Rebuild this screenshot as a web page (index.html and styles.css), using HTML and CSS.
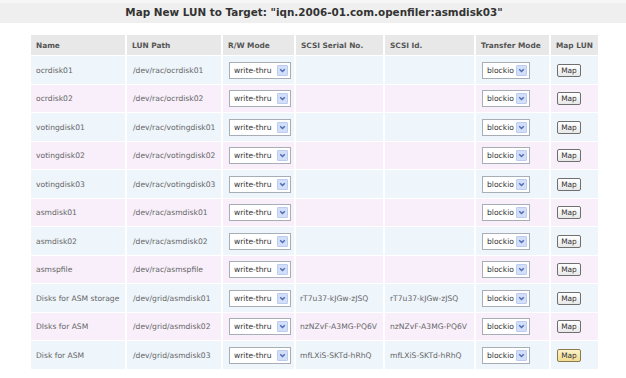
FILE: index.html
```html
<!DOCTYPE html>
<html>
<head>
	<title>Map New LUN</title>
	<meta charset=utf-8>
	<link rel="stylesheet" href="styles.css">
</head>
<body>
	<div class="titlebar">Map New LUN to Target: "iqn.2006-01.com.openfiler:asmdisk03"</div>
	<table class="luns">
		<tr class="head">
			<th class="c-name">Name</th>
			<th class="c-path">LUN Path</th>
			<th class="c-rw">R/W Mode</th>
			<th class="c-serial">SCSI Serial No.</th>
			<th class="c-id">SCSI Id.</th>
			<th class="c-tm">Transfer Mode</th>
			<th class="c-map">Map LUN</th>
		</tr>
	</table>

	<script>
		var rows = [
			["ocrdisk01", "/dev/rac/ocrdisk01", "", ""],
			["ocrdisk02", "/dev/rac/ocrdisk02", "", ""],
			["votingdisk01", "/dev/rac/votingdisk01", "", ""],
			["votingdisk02", "/dev/rac/votingdisk02", "", ""],
			["votingdisk03", "/dev/rac/votingdisk03", "", ""],
			["asmdisk01", "/dev/rac/asmdisk01", "", ""],
			["asmdisk02", "/dev/rac/asmdisk02", "", ""],
			["asmspfile", "/dev/rac/asmspfile", "", ""],
			["Disks for ASM storage", "/dev/grid/asmdisk01", "rT7u37-kJGw-zJSQ", "rT7u37-kJGw-zJSQ"],
			["DIsks for ASM", "/dev/grid/asmdisk02", "nzNZvF-A3MG-PQ6V", "nzNZvF-A3MG-PQ6V"],
			["Disk for ASM", "/dev/grid/asmdisk03", "mfLXiS-SKTd-hRhQ", "mfLXiS-SKTd-hRhQ"]
		];
		var arrow = '<span class="arrow"><svg width="9" height="9" viewBox="0 0 9 9"><path d="M2.2 3.2 L4.5 5.5 L6.8 3.2" fill="none" stroke="#4a6db5" stroke-width="1.5"/></svg></span>';
		var table = document.querySelector(".luns");
		for (var i = 0; i < rows.length; i++) {
			var r = rows[i];
			var tr = document.createElement("tr");
			tr.className = i % 2 == 0 ? "blue" : "pink";
			var last = i == rows.length - 1 ? " hot" : "";
			tr.innerHTML =
				'<td>' + r[0] + '</td>' +
				'<td>' + r[1] + '</td>' +
				'<td><span class="select rw"><span class="val">write-thru</span>' + arrow + '</span></td>' +
				'<td>' + r[2] + '</td>' +
				'<td>' + r[3] + '</td>' +
				'<td><span class="select tm"><span class="val">blockio</span>' + arrow + '</span></td>' +
				'<td><button class="mapbtn' + last + '">Map</button></td>';
			table.appendChild(tr);
		}
	</script>
</body>
</html>
```

FILE: styles.css
```css
body {
	margin: 0;
	background: #fff;
	font-family: "DejaVu Sans", Verdana, sans-serif;
}
.titlebar {
	height: 23px;
	line-height: 24px;
	background: linear-gradient(#f6f6f6 0, #f6f6f6 3px, #efefef 3px);
	color: #333;
	font-weight: bold;
	font-size: 10.4px;
	text-align: center;
	padding-left: 2px;
}
.luns {
	margin: 11px 0 0 29px;
	border-collapse: separate;
	border-spacing: 2px 1.4px;
	font-size: 7.6px;
	color: #666;
}
.luns th {
	background: #e8e8e8;
	color: #555;
	font-weight: bold;
	font-size: 7.4px;
	text-align: left;
	height: 20px;
	padding: 0 0 0 5px;
	white-space: nowrap;
}
.luns td {
	height: 27px;
	padding: 0.5px 0 0 5px;
	white-space: nowrap;
}
tr.blue td { background: #eef5fb; }
tr.pink td { background: #f8effa; }
.c-name { width: 89px; }
.c-path { width: 89px; }
.c-rw { width: 66px; }
.c-serial { width: 82px; }
.c-id { width: 84px; }
.c-tm { width: 68px; }
.c-map { width: 42px; }
.luns td:nth-child(2) { padding-left: 6px; }
.luns td:nth-child(3) { padding-left: 6px; }
.luns td:nth-child(4) { padding-left: 4px; }
.luns td:nth-child(6) { padding-left: 6px; }
.luns td:nth-child(7) { padding-left: 6px; }
.select {
	display: inline-flex;
	align-items: center;
	justify-content: space-between;
	box-sizing: border-box;
	height: 17px;
	border: 1px solid #a7aeb5;
	background: #fff;
	color: #333;
	padding: 0 2px 0 4px;
	vertical-align: middle;
}
.select.rw { width: 62px; }
.select.tm { width: 48px; }
.arrow {
	display: inline-flex;
	align-items: center;
	justify-content: center;
	width: 11px;
	height: 11px;
	box-sizing: border-box;
	background: #d3def9;
	border: 1px solid #bccbf0;
	border-radius: 1px;
}
.mapbtn {
	font-family: "DejaVu Sans", Verdana, sans-serif;
	font-size: 7.4px;
	color: #333;
	width: 24px;
	height: 13px;
	padding: 0;
	border: 1px solid #6f6f6f;
	border-radius: 2px;
	background: linear-gradient(#ffffff, #e8e8e8);
	vertical-align: middle;
}
.mapbtn.hot {
	background: linear-gradient(#fdf3c9, #f3dc92);
	border-color: #8a7a4e;
}
```
